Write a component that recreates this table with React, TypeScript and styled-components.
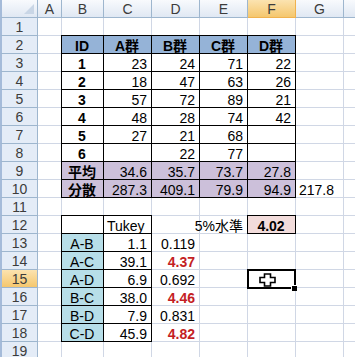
import React from "react";
import styled, { createGlobalStyle, css } from "styled-components";

const GlobalStyle = createGlobalStyle`
  html, body {
    margin: 0;
    padding: 0;
    background: #fff;
  }
  body {
    font-family: "Liberation Sans", "Noto Sans CJK JP", sans-serif;
  }
`;

const COLUMNS = ["A", "B", "C", "D", "E", "F", "G", "H"];
const WIDTHS = [24, 42, 48, 48, 48, 48, 48, 48];
const ROW_COUNT = 19;
const ACTIVE_COL = "F";
const ACTIVE_ROW = 15;
// the H column only peeks in at the right edge, its letter is off screen
const VISIBLE_LETTERS = ["A", "B", "C", "D", "E", "F", "G"];

const GRID = "#d0d7e5";
const HEAD_LINE = "#9eb6ce";
const BLUE = "#95b3d7";
const PURPLE = "#ccc0da";
const CYAN = "#b7dee8";
const PINK = "#f2dcdb";

type Align = "l" | "c" | "r";
type CellSpec = {
  v?: string;
  a?: Align;
  b?: boolean;
  f?: string;
  red?: boolean;
  box?: boolean;
};

const head = (v: string): CellSpec => ({ v, a: "c", b: true, f: BLUE, box: true });
const num = (v: string, f?: string): CellSpec => ({ v, a: "r", f, box: true });

const dataRow = (id: string, vals: string[]) => ({
  B: { v: id, a: "c" as Align, b: true, box: true },
  C: num(vals[0]),
  D: num(vals[1]),
  E: num(vals[2]),
  F: num(vals[3])
});

const pairRow = (pair: string, diff: string, q: string, sig?: boolean) => ({
  B: { v: pair, a: "c" as Align, f: CYAN, box: true },
  C: num(diff),
  D: { v: q, a: "r" as Align, b: sig, red: sig }
});

const SHEET: Record<number, Record<string, CellSpec>> = {
  2: { B: head("ID"), C: head("A群"), D: head("B群"), E: head("C群"), F: head("D群") },
  3: dataRow("1", ["23", "24", "71", "22"]),
  4: dataRow("2", ["18", "47", "63", "26"]),
  5: dataRow("3", ["57", "72", "89", "21"]),
  6: dataRow("4", ["48", "28", "74", "42"]),
  7: dataRow("5", ["27", "21", "68", ""]),
  8: dataRow("6", ["", "22", "77", ""]),
  9: {
    B: { v: "平均", a: "c", b: true, f: PURPLE, box: true },
    C: num("34.6", PURPLE),
    D: num("35.7", PURPLE),
    E: num("73.7", PURPLE),
    F: num("27.8", PURPLE)
  },
  10: {
    B: { v: "分散", a: "c", b: true, f: PURPLE, box: true },
    C: num("287.3", PURPLE),
    D: num("409.1", PURPLE),
    E: num("79.9", PURPLE),
    F: num("94.9", PURPLE),
    G: { v: "217.8", a: "l" }
  },
  12: {
    B: { box: true },
    C: { v: "Tukey", a: "l", box: true },
    E: { v: "5%水準", a: "r" },
    F: { v: "4.02", a: "c", b: true, f: PINK, box: true }
  },
  13: pairRow("A-B", "1.1", "0.119"),
  14: pairRow("A-C", "39.1", "4.37", true),
  15: pairRow("A-D", "6.9", "0.692"),
  16: pairRow("B-C", "38.0", "4.46", true),
  17: pairRow("B-D", "7.9", "0.831"),
  18: pairRow("C-D", "45.9", "4.82", true)
};

const Sheet = styled.div`
  display: grid;
  grid-template-columns: 38px ${WIDTHS.map(w => `${w}px`).join(" ")};
  grid-auto-rows: 18px;
  width: 355px;
  height: 357px;
  overflow: hidden;
  font-size: 14px;
  color: #000;
`;

const Corner = styled.div`
  position: relative;
  box-sizing: border-box;
  border-left: 2px solid #a5bbd9;
  border-right: 1px solid ${HEAD_LINE};
  border-bottom: 1px solid ${HEAD_LINE};
  background: linear-gradient(#f8fafd, #e0e8f3);

  &::after {
    content: "";
    position: absolute;
    right: 3px;
    bottom: 3px;
    border-left: 10px solid transparent;
    border-bottom: 10px solid #c9d6e6;
  }
`;

const ColHead = styled.div<{ $active?: boolean }>`
  box-sizing: border-box;
  display: flex;
  align-items: center;
  justify-content: center;
  padding-top: 1px;
  border-right: 1px solid ${({ $active }) => ($active ? "#f0b24f" : HEAD_LINE)};
  border-bottom: 1px solid ${({ $active }) => ($active ? "#f0b24f" : HEAD_LINE)};
  background: ${({ $active }) =>
    $active
      ? "linear-gradient(#fbe3b0, #f5c76e)"
      : "linear-gradient(#f8fafd, #e0e8f3)"};
  color: #3c3c3c;
  font-size: 14px;
`;

const RowHead = styled.div<{ $active?: boolean }>`
  box-sizing: border-box;
  display: flex;
  align-items: center;
  justify-content: center;
  padding-top: 1px;
  border-left: 2px solid #a5bbd9;
  border-right: 1px solid ${HEAD_LINE};
  border-bottom: 1px solid ${HEAD_LINE};
  background: ${({ $active }) =>
    $active ? "linear-gradient(#fbe3b0, #f5c76e)" : "#e4ecf7"};
  color: #3c3c3c;
  font-size: 14px;
`;

const justify: Record<Align, string> = {
  l: "flex-start",
  c: "center",
  r: "flex-end"
};

const Cell = styled.div<{
  $align: Align;
  $bold?: boolean;
  $fill?: string;
  $red?: boolean;
  $box?: boolean;
  $active?: boolean;
}>`
  box-sizing: border-box;
  display: flex;
  justify-content: ${({ $align }) => justify[$align]};
  padding: 2px 4px 0 3px;
  line-height: 16px;
  white-space: nowrap;
  border-right: 1px solid ${GRID};
  border-bottom: 1px solid ${GRID};
  background: ${({ $fill }) => $fill || "transparent"};
  font-weight: ${({ $bold }) => ($bold ? 700 : 400)};
  color: ${({ $red }) => ($red ? "#c41e24" : "#000")};
  position: ${({ $box, $active }) => ($box || $active ? "relative" : "static")};

  ${({ $box }) =>
    $box &&
    css`
      &::after {
        content: "";
        position: absolute;
        left: -1px;
        top: -1px;
        right: -1px;
        bottom: -1px;
        border: 1px solid #000;
        pointer-events: none;
      }
    `}
`;

// thick frame of the active cell, drawn over the grid lines
const Selection = styled.div`
  position: absolute;
  left: -1px;
  top: -1px;
  right: -1px;
  bottom: -2px;
  display: flex;
  align-items: center;
  justify-content: center;
  box-sizing: border-box;
  border: 2px solid #000;
  pointer-events: none;
  z-index: 2;
`;

const FillHandle = styled.div`
  position: absolute;
  right: -3px;
  bottom: -4px;
  width: 6px;
  height: 6px;
  box-sizing: border-box;
  background: #000;
  border-top: 1px solid #fff;
  border-left: 1px solid #fff;
`;

const Cursor = styled.svg`
  margin-left: -8px;
  margin-top: 1px;
`;

const App: React.FunctionComponent<{}> = () => {
  const rows = Array.from({ length: ROW_COUNT }, (_, i) => i + 1);

  return (
    <>
      <GlobalStyle />
      <Sheet>
        <Corner />
        {COLUMNS.map(col => (
          <ColHead key={col} $active={col === ACTIVE_COL}>
            {VISIBLE_LETTERS.includes(col) ? col : ""}
          </ColHead>
        ))}
        {rows.map(r => (
          <React.Fragment key={r}>
            <RowHead $active={r === ACTIVE_ROW}>{r}</RowHead>
            {COLUMNS.map(col => {
              const spec = (SHEET[r] && SHEET[r][col]) || {};
              const active = r === ACTIVE_ROW && col === ACTIVE_COL;
              return (
                <Cell
                  key={col}
                  $align={spec.a || "l"}
                  $bold={spec.b}
                  $fill={spec.f}
                  $red={spec.red}
                  $box={spec.box}
                  $active={active}
                >
                  {spec.v}
                  {active && (
                    <Selection>
                      <Cursor width="17" height="14" viewBox="0 0 17 14">
                        <polygon
                          points="5.5,1 11.5,1 11.5,4.5 16,4.5 16,9.5 11.5,9.5 11.5,13 5.5,13 5.5,9.5 1,9.5 1,4.5 5.5,4.5"
                          fill="#fff"
                          stroke="#000"
                          strokeWidth="1.6"
                        />
                      </Cursor>
                      <FillHandle />
                    </Selection>
                  )}
                </Cell>
              );
            })}
          </React.Fragment>
        ))}
      </Sheet>
    </>
  );
};

export default App;
